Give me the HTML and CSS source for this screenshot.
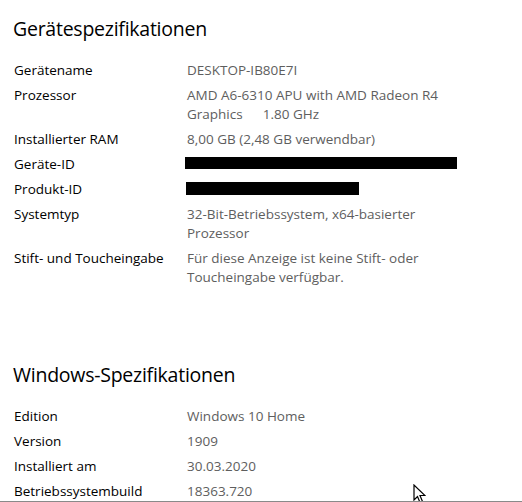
FILE: index.html
```html
<!DOCTYPE html>
<html lang="de">
<head>
<meta charset="utf-8">
<title>Info</title>
<link rel="stylesheet" href="styles.css">
</head>
<body>
<main class="page">
  <section class="spec spec-device">
    <h2 class="spec-title">Gerätespezifikationen</h2>
    <dl class="spec-list">
      <div class="spec-row"><dt>Gerätename</dt><dd>DESKTOP-IB80E7I</dd></div>
      <div class="spec-row"><dt>Prozessor</dt><dd><span class="line">AMD A6-6310 APU with AMD Radeon R4</span><span class="line">Graphics<span class="clock">1.80 GHz</span></span></dd></div>
      <div class="spec-row"><dt>Installierter RAM</dt><dd>8,00 GB (2,48 GB verwendbar)</dd></div>
      <div class="spec-row"><dt>Geräte-ID</dt><dd><span class="redact redact-long"></span></dd></div>
      <div class="spec-row"><dt>Produkt-ID</dt><dd><span class="redact redact-short"></span></dd></div>
      <div class="spec-row"><dt>Systemtyp</dt><dd>32-Bit-Betriebssystem, x64-basierter Prozessor</dd></div>
      <div class="spec-row"><dt>Stift- und Toucheingabe</dt><dd>Für diese Anzeige ist keine Stift- oder Toucheingabe verfügbar.</dd></div>
    </dl>
  </section>
  <section class="spec spec-windows">
    <h2 class="spec-title">Windows-Spezifikationen</h2>
    <dl class="spec-list">
      <div class="spec-row"><dt>Edition</dt><dd>Windows 10 Home</dd></div>
      <div class="spec-row"><dt>Version</dt><dd>1909</dd></div>
      <div class="spec-row"><dt>Installiert am</dt><dd>30.03.2020</dd></div>
      <div class="spec-row"><dt>Betriebssystembuild</dt><dd>18363.720</dd></div>
    </dl>
  </section>
  <svg class="cursor" width="13" height="20" viewBox="0 0 13 20" aria-hidden="true">
    <path d="M1 1 L1 16 L4.5 12.5 L7 18.5 L9.5 17.5 L7 11.5 L12 11.5 Z" fill="#fff" stroke="#000" stroke-width="1.2" stroke-linejoin="miter"/>
  </svg>
</main>
</body>
</html>
```
FILE: styles.css
```css
html, body {
  margin: 0;
  padding: 0;
  background: #fff;
}

.page {
  position: relative;
  box-sizing: border-box;
  height: 502px;
  padding: 15px 0 0 13px;
  border-bottom: 1px solid #8a8a8a;
  overflow: hidden;
  font-family: "Open Sans", "Noto Sans", sans-serif;
  color: #000;
}

.spec-title {
  margin: 0;
  font-size: 19.5px;
  font-weight: 400;
  line-height: 28px;
  letter-spacing: -0.25px;
}

.spec-list {
  margin: 18px 0 0 1px;
  padding: 0;
  display: flex;
  flex-direction: column;
  gap: 6px;
}

.spec-windows {
  margin-top: 74px;
}

.spec-row {
  display: grid;
  grid-template-columns: 173px 272px;
  font-size: 13.5px;
  line-height: 19px;
}

.spec-row dt {
  margin: 0;
  color: #000;
}

.spec-row dd {
  margin: 0;
  color: #5e5e5e;
}

.line {
  display: block;
}

.clock {
  margin-left: 20px;
}

.redact {
  display: block;
  height: 12px;
  margin-top: 2px;
  background: #000;
}

.redact-long {
  width: 272px;
  margin-left: -2px;
}

.redact-short {
  width: 173px;
  margin-left: -1px;
  height: 13px;
}

.cursor {
  position: absolute;
  left: 413px;
  top: 484px;
}
```
